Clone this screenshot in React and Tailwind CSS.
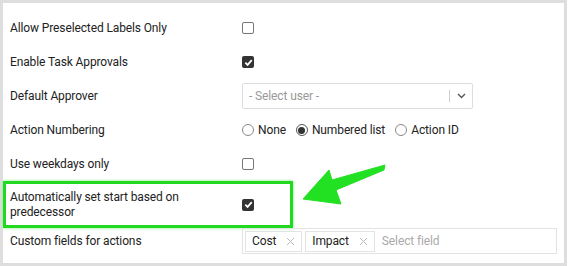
import React from 'react';

const Checkbox = ({ checked }) =>
  checked ? (
    <span className="flex items-center justify-center w-[12px] h-[12px] rounded-[2px] bg-[#333]">
      <svg width="9" height="9" viewBox="0 0 10 10">
        <path d="M1.5 5.2 L4 7.6 L8.6 2.4" stroke="#fff" strokeWidth="2" fill="none" />
      </svg>
    </span>
  ) : (
    <span className="block w-[12px] h-[12px] rounded-[2px] border border-[#777] bg-white"></span>
  );

const Radio = ({ checked, label }) => (
  <label className="flex items-center gap-[4px]">
    {checked ? (
      <span className="flex items-center justify-center w-[12px] h-[12px] rounded-full border border-[#555] bg-white">
        <span className="block w-[7px] h-[7px] rounded-full bg-[#333]"></span>
      </span>
    ) : (
      <span className="block w-[12px] h-[12px] rounded-full border border-[#888] bg-white"></span>
    )}
    <span>{label}</span>
  </label>
);

const Tag = ({ text }) => (
  <span className="flex items-center h-[21px] px-[6px] border border-[#e3e3e3] gap-[10px]">
    <span className="text-[#222]">{text}</span>
    <svg width="9" height="9" viewBox="0 0 9 9">
      <path d="M1 1 L8 8 M8 1 L1 8" stroke="#bbb" strokeWidth="1" />
    </svg>
  </span>
);

const Row = ({ label, children }) => (
  <div className="flex items-center h-[34px] pl-[7px]">
    <div className="w-[232px] shrink-0">{label}</div>
    <div className="flex items-center">{children}</div>
  </div>
);

export default function App() {
  return (
    <div className="relative w-[570px] h-[266px] bg-white" style={{ fontFamily: 'Roboto, "Liberation Sans", sans-serif' }}>
      <div className="w-[567px] h-[266px] border-[3px] border-[#dedede] pt-[8px] text-[12px] tracking-[-0.12px] text-[#222]">
        <Row label="Allow Preselected Labels Only">
          <Checkbox />
        </Row>
        <Row label="Enable Task Approvals">
          <Checkbox checked />
        </Row>
        <Row label="Default Approver">
          <div className="flex items-center w-[231px] h-[26px] border border-[#ddd] rounded-[2px] bg-white">
            <span className="flex-1 pl-[6px] text-[#999]">- Select user -</span>
            <span className="w-px h-[12px] bg-[#ccc]"></span>
            <span className="w-[22px] flex justify-center">
              <svg width="9" height="6" viewBox="0 0 9 6">
                <path d="M1 1 L4.5 4.5 L8 1" stroke="#555" strokeWidth="1.4" fill="none" />
              </svg>
            </span>
          </div>
        </Row>
        <Row label="Action Numbering">
          <div className="flex items-center gap-[10px]">
            <Radio label="None" />
            <Radio checked label="Numbered list" />
            <Radio label="Action ID" />
          </div>
        </Row>
        <Row label="Use weekdays only">
          <Checkbox />
        </Row>
        <div className="flex items-center w-[290px] h-[47px] border-[3px] border-[#22d922] pl-[4px] shadow-[0_0_3px_#7ef07e]">
          <div className="w-[232px] shrink-0 leading-[15px]">
            Automatically set start based on
            <br />
            predecessor
          </div>
          <Checkbox checked />
        </div>
        <div className="flex items-center h-[26px] pl-[7px]">
          <div className="w-[232px] shrink-0">Custom fields for actions</div>
          <div className="flex items-center w-[315px] h-[26px] border border-[#e3e3e3] pl-[2px] gap-[3px]">
            <Tag text="Cost" />
            <Tag text="Impact" />
            <span className="pl-[4px] text-[#aaa]">Select field</span>
          </div>
        </div>
      </div>
      <svg className="absolute left-0 top-0 pointer-events-none" width="570" height="266" viewBox="0 0 570 266">
        <polygon
          points="303,199 329,170 332,180 385,165 384,170 336,190 341,204"
          fill="#22e022"
          stroke="#22e022"
          strokeWidth="1"
          strokeLinejoin="round"
        />
      </svg>
    </div>
  );
}
